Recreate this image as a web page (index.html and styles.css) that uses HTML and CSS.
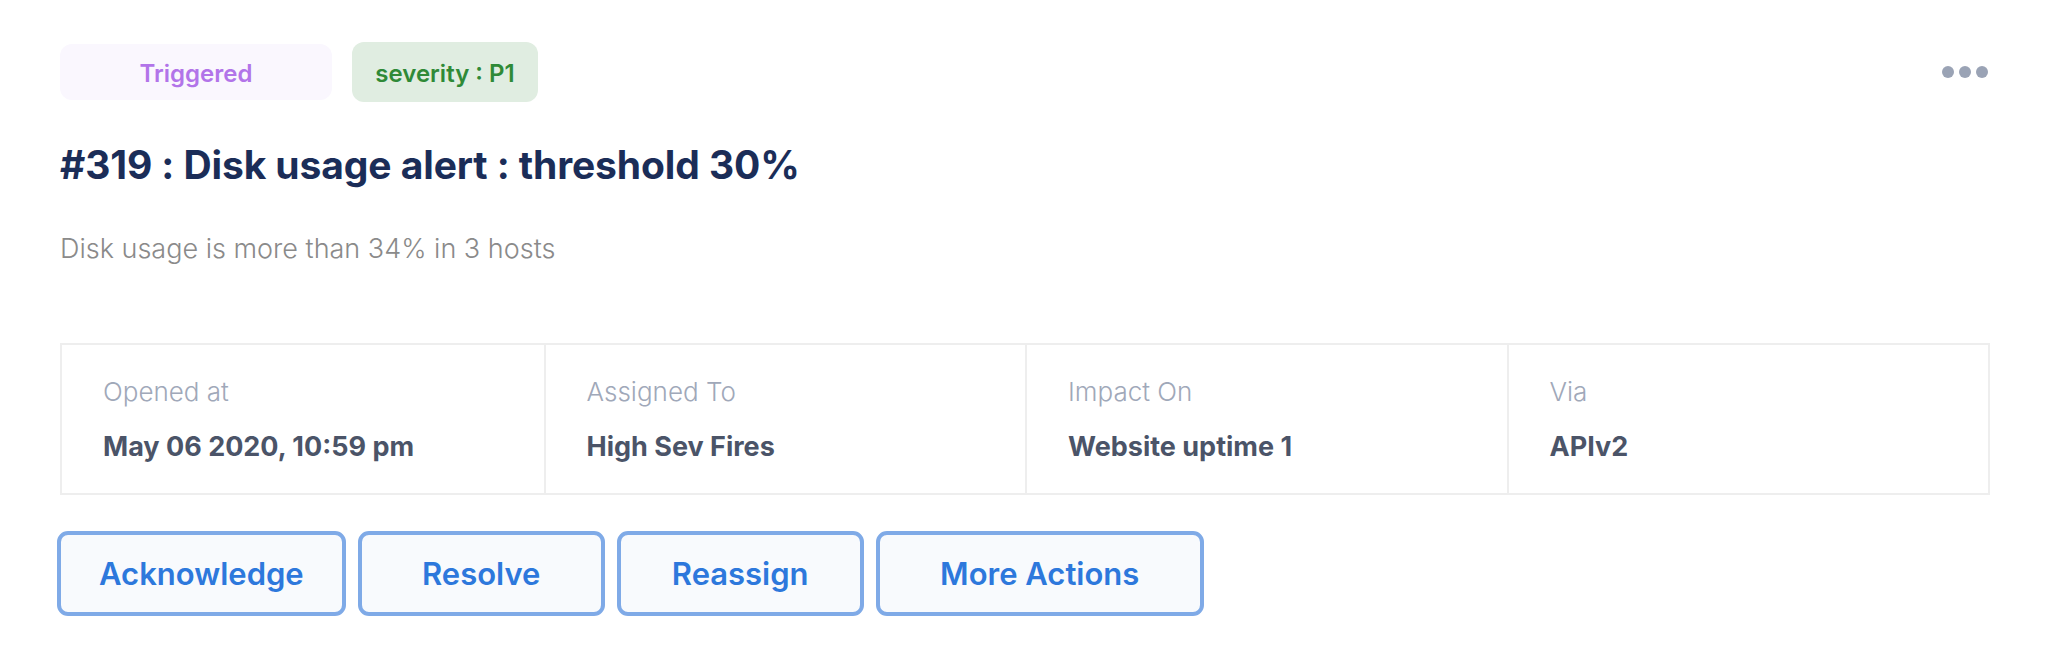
FILE: index.html
```html
<!DOCTYPE html>
<html lang="en">
<head>
<meta charset="utf-8">
<title>Incident #319</title>
<link rel="stylesheet" href="styles.css">
</head>
<body>
<div class="incident">
  <div class="top">
    <div class="tags">
      <span class="tag tag-status">Triggered</span>
      <span class="tag tag-sev">severity : P1</span>
    </div>
    <button class="more" aria-label="More">
      <span class="dot"></span><span class="dot"></span><span class="dot"></span>
    </button>
  </div>
  <h1 class="title">#319 : Disk usage alert : threshold 30%</h1>
  <p class="desc">Disk usage is more than 34% in 3 hosts</p>
  <div class="meta">
    <div class="cell"><div class="label">Opened at</div><div class="value">May 06 2020, 10:59 pm</div></div>
    <div class="cell"><div class="label">Assigned To</div><div class="value">High Sev Fires</div></div>
    <div class="cell"><div class="label">Impact On</div><div class="value">Website uptime 1</div></div>
    <div class="cell"><div class="label">Via</div><div class="value">APIv2</div></div>
  </div>
  <div class="actions">
    <button class="btn">Acknowledge</button>
    <button class="btn">Resolve</button>
    <button class="btn">Reassign</button>
    <button class="btn btn-wide">More Actions</button>
  </div>
</div>
</body>
</html>
```
FILE: styles.css
```css
* { box-sizing: border-box; }
html, body { margin: 0; padding: 0; background: #ffffff; }
body { font-family: "Inter", "Roboto", sans-serif; }

.incident { padding: 42px 51px 0 60px; }

.top { display: flex; align-items: center; justify-content: space-between; height: 60px; }
.tags { display: flex; align-items: center; gap: 20px; }
.tag {
  display: inline-flex; align-items: center; justify-content: center;
  font-size: 24px; font-weight: 600; border-radius: 12px; padding-top: 2px;
}
.tag-status { width: 272px; height: 56px; background: #faf7fe; color: #b274e9; }
.tag-sev { width: 186px; height: 60px; background: #e0ede1; color: #2f8a37; }

.more {
  display: flex; gap: 5px; align-items: center; background: none; border: 0; padding: 0 11px 0 0; cursor: pointer;
}
.dot { width: 12px; height: 12px; border-radius: 50%; background: #9aa3b5; }

.title {
  margin: 40px 0 0; font-size: 39px; font-weight: 700; color: #1b2d58; line-height: 46px; letter-spacing: -0.1px;
}
.desc {
  margin: 45px 0 0; font-size: 27px; font-weight: 300; color: #8a8a8a; line-height: 32px;
}

.meta {
  margin-top: 78px; margin-right: 9px; display: grid; grid-template-columns: repeat(4, 1fr);
  border: 2px solid #eeeeee; height: 152px;
}
.cell { padding: 31px 40px 0 41px; border-left: 2px solid #eeeeee; }
.cell:first-child { border-left: 0; }
.label { font-size: 26px; font-weight: 300; color: #a0a8b9; line-height: 32px; }
.value { margin-top: 22px; font-size: 27px; font-weight: 700; color: #4b5468; line-height: 34px; }

.actions { display: flex; gap: 12px; margin: 36px 0 0 -3px; }
.btn {
  height: 85px; min-width: 247px; padding: 0 38px;
  border: 4px solid #7faae7; border-radius: 11px; background: #f8fafd;
  font-family: inherit; font-size: 31px; font-weight: 600; color: #2d78dc; cursor: pointer;
}
.btn-wide { width: 328px; }
```
